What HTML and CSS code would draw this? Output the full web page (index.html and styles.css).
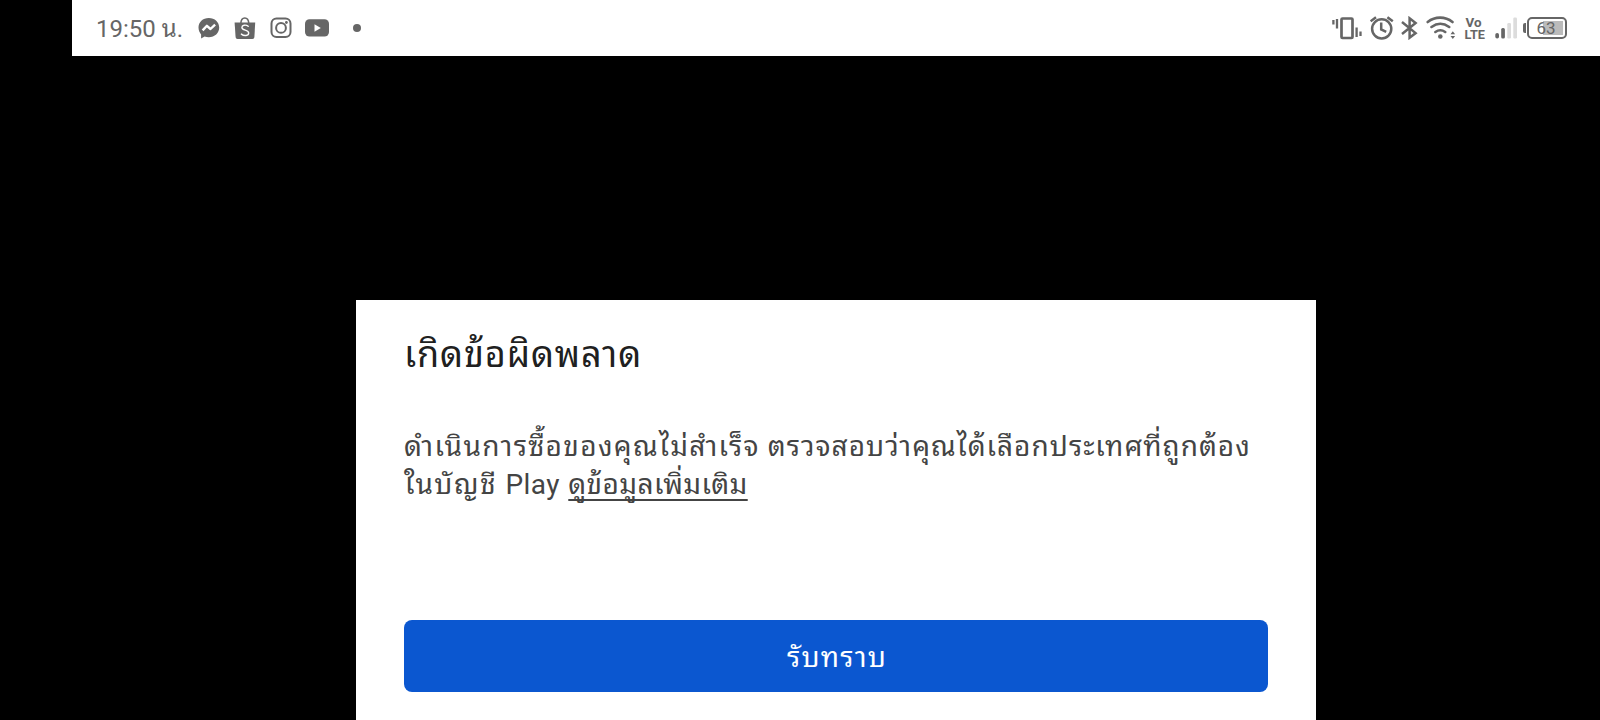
FILE: index.html
```
<!DOCTYPE html>
<html lang="th">
<head>
<meta charset="UTF-8" />
<meta name="viewport" content="width=device-width, initial-scale=1" />
<title>เกิดข้อผิดพลาด</title>
<link rel="stylesheet" href="styles.css">
</head>
<body>

<!-- Status bar -->
<header class="status-bar">
  <div class="notifications">
    <span class="clock">19:50 <span class="clock-unit">น.</span></span>
    <!-- Messenger -->
    <svg class="icon" width="22" height="24" viewBox="0 0 22 24">
      <path fill="currentColor" d="M10.800 2C4.800 2 .5 6.200 .5 11.600c0 2.900 1.200 5.300 2.600 7v3.900l3.500-1.900c1.400.5 2.700.7 4.200.7 6 0 10.400-4.300 10.400-9.700S16.800 2 10.800 2z"/>
      <path fill="none" stroke="#fff" stroke-width="2.400" stroke-linejoin="round" d="M4.600 14.400l4.300-4.600 3.600 3.200 4.600-4.400"/>
    </svg>
    <!-- Shopee -->
    <svg class="icon" width="22" height="24" viewBox="0 0 22 24">
      <path fill="none" stroke="currentColor" stroke-width="1.500" d="M6.800 7.500C7 4 8.600 2 10.800 2s3.800 2 4 5.500"/>
      <path fill="currentColor" d="M.6 6.500h20.600l-.8 14.500c-.1 1.200-.8 2-2 2H3.600c-1.200 0-1.900-.8-2-2z"/>
      <path fill="none" stroke="#fff" stroke-width="1.400" stroke-linecap="round" d="M14.200 10.300c-2.500-2-6.300-1.200-6.300 1.200 0 3.200 6.800 2.100 6.800 5.400 0 2.900-4.500 3.500-7.300 1.200"/>
    </svg>
    <!-- Instagram -->
    <svg class="icon" width="22" height="24" viewBox="0 0 22 24">
      <g fill="none" stroke="currentColor" stroke-width="2">
        <rect x="1.500" y="2.500" width="19" height="18.500" rx="5"/>
        <circle cx="11" cy="11.900" r="4.900"/>
      </g>
      <circle cx="16.400" cy="6.500" r="1.400" fill="currentColor"/>
    </svg>
    <!-- YouTube -->
    <svg class="icon youtube" width="24" height="24" viewBox="0 0 24 24">
      <rect y="3.200" width="24" height="17.400" rx="4.500" fill="currentColor"/>
      <path fill="#fff" d="M9.500 8.200v7.500l6.300-3.700z"/>
    </svg>
    <span class="more-dot"></span>
  </div>

  <div class="system">
    <!-- Vibrate -->
    <svg class="icon vibrate" width="30" height="24" viewBox="0 0 30 24">
      <g fill="none" stroke="currentColor">
        <rect x="9.500" y="2.500" width="11" height="19.500" rx="1" stroke-width="2.700"/>
        <path stroke-width="2.300" d="M5 3v9.500M1.400 4v4.500M24.600 11.500v9.500M28.500 15.500v4.500"/>
      </g>
    </svg>
    <!-- Alarm -->
    <svg class="icon alarm" width="24" height="24" viewBox="0 0 24 24">
      <g fill="none" stroke="currentColor" stroke-width="2.500">
        <circle cx="11.700" cy="12.800" r="9.600"/>
        <path d="M11.200 6.500v7l5 2.400M.6 5.300L6 1.200M17.400 1.200l5.400 4.100"/>
      </g>
    </svg>
    <!-- Bluetooth -->
    <svg class="icon bluetooth" width="18" height="24" viewBox="0 0 18 24">
      <path fill="none" stroke="currentColor" stroke-width="2.500" d="M1 6l13.600 11.100-6 4.600v-19.400l6 4.700L1 18"/>
    </svg>
    <!-- Wi-Fi -->
    <svg class="icon wifi" width="30" height="24" viewBox="0 0 30 24">
      <g fill="none" stroke="currentColor" stroke-width="2.600" stroke-linecap="round">
        <path d="M1.700 6c7.500-5.800 17.300-5.800 24.800 0M5.500 11c5.500-4 12.200-4 17.700 0M9.400 16c3-2.100 6.800-2.100 9.800 0"/>
      </g>
      <circle cx="14.300" cy="20.500" r="2.300" fill="currentColor"/>
      <path fill="currentColor" d="M24.500 18.300l2.300-3 2.300 3zM24.500 20h4.600l-2.300 3z"/>
    </svg>
    <!-- VoLTE -->
    <svg class="icon volte" width="22" height="24" viewBox="0 0 22 24">
      <text x="0.500" y="10.500" textLength="16" lengthAdjust="spacingAndGlyphs">Vo</text>
      <text x="-0.500" y="22.700" textLength="20.500" lengthAdjust="spacingAndGlyphs">LTE</text>
    </svg>
    <!-- Signal -->
    <svg class="icon signal" width="24" height="24" viewBox="0 0 24 24">
      <g fill="currentColor">
        <rect x=".3" y="17" width="3.700" height="5.500" rx="1.800"/>
        <rect x="6.200" y="12" width="3.700" height="10.500" rx="1.500"/>
      </g>
      <g fill="#dcdcdc">
        <rect x="12.300" y="7" width="3.700" height="15.500" rx="1.200"/>
        <rect x="18.300" y="1.500" width="3.700" height="21" rx="1.200"/>
      </g>
    </svg>
    <div class="battery"><span class="battery-level"></span><span class="battery-text">63</span></div>
  </div>
</header>

<!-- Error dialog -->
<main class="dialog">
  <h1 class="title">เกิดข้อผิดพลาด</h1>
  <p class="message">
    <span class="line line-one"><span class="lead">ดำเนินการซื้อของคุณไม่สำเร็จ</span> ตรวจสอบว่าคุณได้เลือกประเทศที่ถูกต้อง</span>
    <span class="line line-two">ในบัญชี <span class="brand">Play</span> <a class="link">ดูข้อมูลเพิ่มเติม</a></span>
  </p>
  <button class="confirm">รับทราบ</button>
</main>

</body>
</html>
```
FILE: styles.css
```
body {
  margin: 0;
  height: 720px;
  overflow: hidden;
  background: #000;
  font-family: Roboto, "Noto Sans Thai Looped", "Noto Looped Thai", "Droid Sans Thai", Loma, Garuda, Waree, Umpush, "Leelawadee UI", Tahoma, "Noto Sans Thai", sans-serif;
  display: flex;
  flex-direction: column;
}

/* Status bar */
.status-bar {
  flex: none;
  box-sizing: border-box;
  height: 56px;
  margin-left: 72px;
  padding: 0 33px 0 24px;
  background: #fff;
  color: #666;
  display: flex;
  align-items: center;
  justify-content: space-between;
}
.notifications,
.system {
  display: flex;
  align-items: center;
}
.notifications {
  gap: 14px;
}
.clock {
  width: 88px;
  padding-top: 2px;
  font-size: 24px;
  line-height: 28px;
  white-space: nowrap;
}
.icon {
  display: block;
  flex: none;
}
.youtube {
  margin-left: -1px;
}
.more-dot {
  width: 8px;
  height: 8px;
  margin-left: 10px;
  border-radius: 50%;
  background: #666;
}
.alarm {
  margin-left: 8px;
}
.bluetooth {
  margin-left: 7px;
}
.wifi {
  margin-left: 7px;
}
.volte {
  margin-left: 9px;
  overflow: visible;
  fill: #666;
  font-size: 12.800px;
  font-weight: 700;
}
.signal {
  margin-left: 8px;
}
.battery {
  position: relative;
  box-sizing: border-box;
  width: 40px;
  height: 22px;
  margin-left: 8px;
  border: 2px solid #666;
  border-radius: 5px;
}
.battery::before {
  content: "";
  position: absolute;
  left: -6px;
  top: 4px;
  width: 3px;
  height: 10px;
  border-radius: 2px 0 0 2px;
  background: #666;
}
.battery-level {
  position: absolute;
  top: 2px;
  right: 2px;
  width: 20px;
  height: 14px;
  background: #bbb;
}
.battery-text {
  position: absolute;
  inset: 0 2px 0 0;
  font-size: 17px;
  line-height: 19px;
  text-align: center;
}

/* Dialog */
.dialog {
  flex: none;
  box-sizing: border-box;
  width: 960px;
  height: 420px;
  margin: 244px 0 0 356px;
  padding: 33px 48px 0;
  background: #fff;
}
.title {
  margin: 0;
  height: 44px;
  font-size: 36px;
  font-weight: 400;
  line-height: 44px;
  letter-spacing: 0.900px;
  color: #202020;
}
.message {
  margin: 51px 0 0;
  height: 76px;
  font-size: 28px;
  line-height: 38px;
  color: #444;
}
.line {
  display: block;
  height: 38px;
  white-space: nowrap;
}
.line-one {
  letter-spacing: 1.030px;
}
.lead {
  letter-spacing: 1.350px;
}
.line-two {
  letter-spacing: 1.500px;
}
.brand {
  letter-spacing: 0.400px;
}
.link {
  letter-spacing: 0.400px;
  text-decoration: underline;
  text-decoration-thickness: 2px;
  text-underline-offset: 5px;
  text-decoration-skip-ink: none;
}
.confirm {
  display: block;
  width: 864px;
  height: 72px;
  margin-top: 116px;
  padding: 0 0 3px 2px;
  border: none;
  border-radius: 8px;
  background: #0b57d0;
  color: #fff;
  font-family: inherit;
  font-size: 28px;
  letter-spacing: 1.200px;
}
```
